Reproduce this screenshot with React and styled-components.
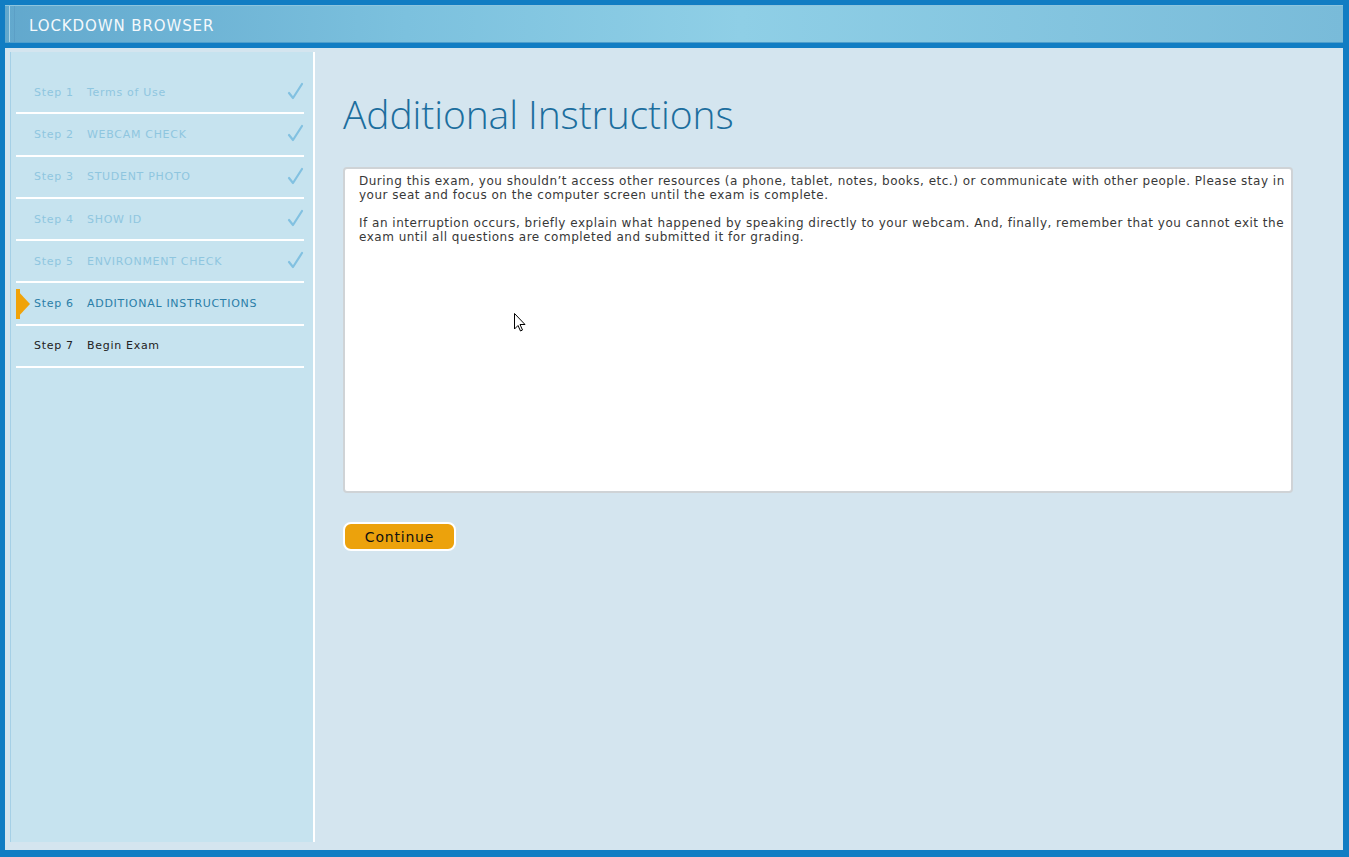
import React from "react";
import styled, { createGlobalStyle } from "styled-components";

const GlobalStyle = createGlobalStyle`
  html, body {
    margin: 0;
    padding: 0;
    background: #117dc3;
  }
  * {
    box-sizing: border-box;
  }
`;

const steps = [
  { num: 1, label: "Terms of Use", state: "done" },
  { num: 2, label: "WEBCAM CHECK", state: "done" },
  { num: 3, label: "STUDENT PHOTO", state: "done" },
  { num: 4, label: "SHOW ID", state: "done" },
  { num: 5, label: "ENVIRONMENT CHECK", state: "done" },
  { num: 6, label: "ADDITIONAL INSTRUCTIONS", state: "active" },
  { num: 7, label: "Begin Exam", state: "todo" },
];

const stepColors = {
  done: "#8fc6df",
  active: "#2a7ea8",
  todo: "#222222",
};

const Check = () => (
  <svg width="18" height="20" viewBox="0 0 18 20">
    <path
      d="M3 12 L7 17 L16 3"
      fill="none"
      stroke="#82c1e1"
      strokeWidth="2.2"
      strokeLinecap="round"
      strokeLinejoin="round"
    />
  </svg>
);

const Cursor = () => (
  <svg width="12" height="19" viewBox="0 0 12 19">
    <path
      d="M0.5 0.5 L0.5 16 L4 12.5 L6.5 18 L8.5 17 L6 11.5 L11 11.5 Z"
      fill="#fff"
      stroke="#000"
      strokeWidth="1"
      strokeLinejoin="miter"
    />
  </svg>
);

const App = () => {
  return (
    <Frame>
      <GlobalStyle />
      <Header>
        <HeaderGrip />
        <Title>LOCKDOWN BROWSER</Title>
      </Header>
      <Body>
        <Sidebar>
          {steps.map((s) => (
            <StepRow key={s.num} state={s.state}>
              {s.state === "active" && <ActiveArrow />}
              <StepNum>Step {s.num}</StepNum>
              <StepLabel>{s.label}</StepLabel>
              {s.state === "done" && (
                <CheckWrap>
                  <Check />
                </CheckWrap>
              )}
            </StepRow>
          ))}
        </Sidebar>
        <Main>
          <Heading>Additional Instructions</Heading>
          <TextBox>
            <p>
              During this exam, you shouldn’t access other resources (a phone,
              tablet, notes, books, etc.) or communicate with other people.
              Please stay in your seat and focus on the computer screen until
              the exam is complete.
            </p>
            <p>
              If an interruption occurs, briefly explain what happened by
              speaking directly to your webcam. And, finally, remember that you
              cannot exit the exam until all questions are completed and
              submitted it for grading.
            </p>
            <CursorWrap>
              <Cursor />
            </CursorWrap>
          </TextBox>
          <ContinueButton>Continue</ContinueButton>
        </Main>
      </Body>
    </Frame>
  );
};

export default App;

const Frame = styled.div`
  width: 1349px;
  height: 857px;
  background: #117dc3;
  padding: 5px 6px 7px 5px;
  display: flex;
  flex-direction: column;
  gap: 5px;
  font-family: "DejaVu Sans", Verdana, sans-serif;
`;

const Header = styled.div`
  height: 38px;
  flex-shrink: 0;
  display: flex;
  align-items: center;
  background: linear-gradient(90deg, #62a8cd 0%, #7cc1de 30%, #8fcfe6 55%, #79bbd9 100%);
  border-top: 1px solid #8ec5de;
  border-bottom: 1px solid #4f9fcc;
`;

const HeaderGrip = styled.div`
  width: 6px;
  height: 100%;
  margin-left: 4px;
  border-left: 1px solid #a9d4e8;
  border-right: 1px solid #5c9fc6;
`;

const Title = styled.div`
  margin: 3px 0 0 14px;
  color: #f4f9fc;
  font-size: 15px;
  letter-spacing: 0.9px;
`;

const Body = styled.div`
  flex: 1;
  display: flex;
  background: #d4e5ef;
  padding: 4px 0 8px 5px;
`;

const Sidebar = styled.div`
  width: 305px;
  flex-shrink: 0;
  background: #c6e3ef;
  border-left: 1px solid #a5d0e6;
  border-right: 2px solid #ffffff;
  padding: 20px 9px 0 5px;
`;

const StepRow = styled.div`
  position: relative;
  height: 42.3px;
  display: flex;
  align-items: center;
  border-bottom: 2px solid #ffffff;
  padding-left: 18px;
  font-size: 11px;
  letter-spacing: 0.7px;
  color: ${(p) => stepColors[p.state]};
`;

const ActiveArrow = styled.div`
  position: absolute;
  left: 0;
  top: 6px;
  width: 0;
  height: 0;
  border-top: 15px solid transparent;
  border-bottom: 15px solid transparent;
  border-left: 14px solid #f0a30a;
  &::before {
    content: "";
    position: absolute;
    left: -14px;
    top: -15px;
    width: 4px;
    height: 30px;
    background: #f0a30a;
  }
`;

const StepNum = styled.span`
  width: 53px;
  flex-shrink: 0;
`;

const StepLabel = styled.span`
  flex: 1;
`;

const CheckWrap = styled.span`
  display: flex;
  align-items: center;
  margin-top: -2px;
`;

const Main = styled.div`
  flex: 1;
  padding: 36px 50px 0 28px;
  display: flex;
  flex-direction: column;
  align-items: flex-start;
`;

const Heading = styled.h1`
  margin: 0 0 27px 0;
  font-family: "Open Sans", "Liberation Sans", sans-serif;
  font-weight: 300;
  font-size: 39px;
  line-height: 52px;
  color: #1c6e9e;
  letter-spacing: -0.1px;
`;

const TextBox = styled.div`
  position: relative;
  width: 950px;
  height: 326px;
  background: #ffffff;
  border: 2px solid #cfd3d6;
  border-radius: 4px;
  padding: 5px 4px 5px 14px;
  font-size: 12px;
  letter-spacing: 0.5px;
  line-height: 14px;
  color: #383838;
  p {
    margin: 0 0 14px 0;
  }
`;

const CursorWrap = styled.div`
  position: absolute;
  left: 169px;
  top: 144px;
`;

const ContinueButton = styled.button`
  margin-top: 29px;
  width: 113px;
  height: 29px;
  background: #eca20c;
  border: 2px solid #ffffff;
  border-radius: 8px;
  font-family: "DejaVu Sans", Verdana, sans-serif;
  font-size: 14px;
  letter-spacing: 0.8px;
  color: #111;
  padding: 0;
  cursor: pointer;
`;
